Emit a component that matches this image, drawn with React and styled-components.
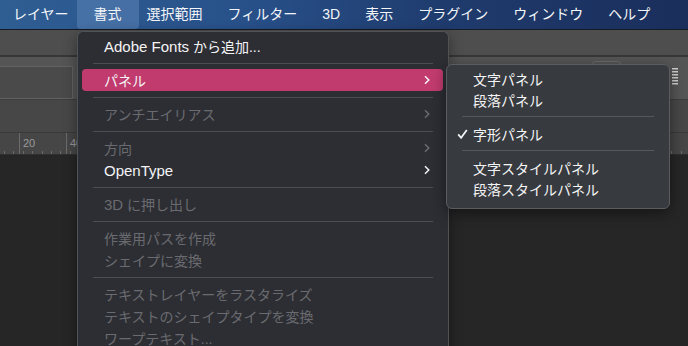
import React from "react";
import styled, { createGlobalStyle, css } from "styled-components";

const GlobalStyle = createGlobalStyle`
  html, body { margin: 0; padding: 0; background: #262626; }
  body { font-family: "Liberation Sans", "Noto Sans CJK JP", sans-serif; }
`;

const Screen = styled.div`
  position: relative;
  width: 688px;
  height: 346px;
  overflow: hidden;
  display: flex;
  flex-direction: column;
  background: #262626;
  font-family: "Liberation Sans", "Noto Sans CJK JP", sans-serif;
`;

const MenuBar = styled.div`
  flex: none;
  height: 29px;
  display: flex;
  padding-left: 0.5px;
  background: linear-gradient(90deg, #2f5e93 0%, #28518a 35%, #1f3b6d 65%, #1a2e5b 100%);
  border-bottom: 1px solid #141a26;
`;

const BarItem = styled.div`
  padding: 0 12.5px;
  line-height: 29px;
  font-size: 14px;
  color: #f3f5f9;
  white-space: nowrap;
  ${(p) =>
    p.$active &&
    css`
      margin: 0 -4.5px;
      padding: 0 17px;
      border-radius: 0 0 4px 4px;
      background: rgba(130, 170, 220, 0.3);
    `}
`;

const TopStrip = styled.div`
  flex: none;
  height: 25px;
  background: #4e4e4e;
  border-bottom: 2px solid #373737;
`;

const OptionsBar = styled.div`
  flex: none;
  height: 42px;
  display: flex;
  align-items: flex-start;
  background: #555555;
  border-bottom: 1px solid #3d3d3d;
`;

const InputBox = styled.div`
  width: 72px;
  height: 31px;
  margin-top: 9px;
  background: #4a4a4a;
  border: 1px solid #626262;
  border-left: none;
`;

const Tab = styled.div`
  margin-left: auto;
  margin-top: 4px;
  width: 27px;
  height: 10px;
  border: 1px solid #6a6a6a;
  border-bottom: none;
  border-radius: 4px 4px 0 0;
`;

const Grip = styled.svg`
  margin: 11px 10px 0 51px;
  flex: none;
`;

const LowerBar = styled.div`
  flex: none;
  height: 32px;
  background: #474747;
  border-bottom: 1px solid #3a3a3a;
`;

const Ruler = styled.div`
  flex: none;
  height: 21px;
  display: flex;
  padding-left: 19px;
  background-color: #464646;
  background-image: repeating-linear-gradient(
    90deg,
    transparent 0,
    transparent 4px,
    #6a6a6a 4px,
    #6a6a6a 5px,
    transparent 5px,
    transparent 9.4px
  );
  background-size: 100% 3px;
  background-repeat: no-repeat;
  background-position: 0 100%;
  border-bottom: 1px solid #2f2f2f;
`;

const RulerMark = styled.div`
  flex: none;
  width: 47px;
  border-left: 1px solid #6c6c6c;
  padding: 4px 0 0 3px;
  font-size: 11px;
  color: #9a9a9a;
  box-sizing: border-box;
`;

const Canvas = styled.div`
  flex: 1;
  background: #262626;
`;

const Menu = styled.div`
  position: absolute;
  left: 77px;
  top: 31px;
  width: 372px;
  height: 330px;
  padding-top: 3px;
  box-sizing: border-box;
  background: #2d2e33;
  border: 1px solid #505256;
  border-bottom: none;
  border-radius: 6px 6px 0 0;
  box-shadow: 0 4px 14px rgba(0, 0, 0, 0.4);
`;

const Row = styled.div`
  display: flex;
  align-items: center;
  height: 22px;
  margin: 0 5px 0 4px;
  padding: 0 13px 0 22px;
  border-radius: 4px;
  font-size: 14px;
  white-space: nowrap;
  color: ${(p) => (p.$disabled ? "#6a6b70" : "#f4f4f6")};
  background: ${(p) => (p.$active ? "#c13b6e" : "transparent")};
`;

const Label = styled.span`
  flex: 1;
`;

const Latin = styled.span`
  font-size: 15px;
`;

const Sep = styled.div`
  height: 1px;
  margin: 6px 15px 5px;
  background: #4c4d52;
`;

const SubMenu = styled.div`
  position: absolute;
  left: 446px;
  top: 64px;
  width: 224px;
  padding: 3px 0 9px;
  box-sizing: border-box;
  background: #373a3e;
  border: 1px solid #5a5c60;
  border-radius: 6px;
  box-shadow: 0 4px 14px rgba(0, 0, 0, 0.45);
`;

const SubRow = styled.div`
  display: flex;
  align-items: center;
  height: 21px;
  padding-left: 10px;
  font-size: 14px;
  color: #f4f4f6;
  white-space: nowrap;
`;

const CheckSlot = styled.span`
  width: 16px;
  flex: none;
  display: flex;
  align-items: center;
`;

const SubSep = styled.div`
  height: 1px;
  margin: 6px 15px 6px;
  background: #55585c;
`;

const Chevron = () => (
  <svg width="6" height="10" viewBox="0 0 6 10">
    <path d="M1 1.2l3.8 3.8L1 8.8" fill="none" stroke="currentColor" strokeWidth="1.5" />
  </svg>
);

const Check = () => (
  <svg width="11" height="10" viewBox="0 0 11 10">
    <path d="M1.2 5.4l2.9 3.4L9.8 1" fill="none" stroke="#f2f2f4" strokeWidth="1.8" />
  </svg>
);

const barItems = ["レイヤー", "書式", "選択範囲", "フィルター", "3D", "表示", "プラグイン", "ウィンドウ", "ヘルプ"];

export default function App() {
  return (
    <Screen>
      <GlobalStyle />
      <MenuBar>
        {barItems.map((t) => (
          <BarItem key={t} $active={t === "書式"}>
            {t}
          </BarItem>
        ))}
      </MenuBar>
      <TopStrip />
      <OptionsBar>
        <InputBox />
        <Tab />
        <Grip width="6" height="17" viewBox="0 0 6 17">
          {[0, 3, 6, 9, 12, 15].map((y) => (
            <rect key={y} x="0" y={y} width="6" height="1.5" fill="#cfcfcf" />
          ))}
        </Grip>
      </OptionsBar>
      <LowerBar />
      <Ruler>
        <RulerMark>20</RulerMark>
        <RulerMark>40</RulerMark>
      </Ruler>
      <Canvas />

      <Menu>
        <Row>
          <Label>
            <Latin>Adobe Fonts</Latin> から追加...
          </Label>
        </Row>
        <Sep />
        <Row $active>
          <Label>パネル</Label>
          <Chevron />
        </Row>
        <Sep />
        <Row $disabled>
          <Label>アンチエイリアス</Label>
          <Chevron />
        </Row>
        <Sep />
        <Row $disabled>
          <Label>方向</Label>
          <Chevron />
        </Row>
        <Row>
          <Label>
            <Latin>OpenType</Latin>
          </Label>
          <Chevron />
        </Row>
        <Sep />
        <Row $disabled>
          <Label>
            <Latin>3D</Latin> に押し出し
          </Label>
        </Row>
        <Sep />
        <Row $disabled>
          <Label>作業用パスを作成</Label>
        </Row>
        <Row $disabled>
          <Label>シェイプに変換</Label>
        </Row>
        <Sep />
        <Row $disabled>
          <Label>テキストレイヤーをラスタライズ</Label>
        </Row>
        <Row $disabled>
          <Label>テキストのシェイプタイプを変換</Label>
        </Row>
        <Row $disabled>
          <Label>ワープテキスト...</Label>
        </Row>
      </Menu>

      <SubMenu>
        <SubRow>
          <CheckSlot />
          文字パネル
        </SubRow>
        <SubRow>
          <CheckSlot />
          段落パネル
        </SubRow>
        <SubSep />
        <SubRow>
          <CheckSlot>
            <Check />
          </CheckSlot>
          字形パネル
        </SubRow>
        <SubSep />
        <SubRow>
          <CheckSlot />
          文字スタイルパネル
        </SubRow>
        <SubRow>
          <CheckSlot />
          段落スタイルパネル
        </SubRow>
      </SubMenu>
    </Screen>
  );
}
